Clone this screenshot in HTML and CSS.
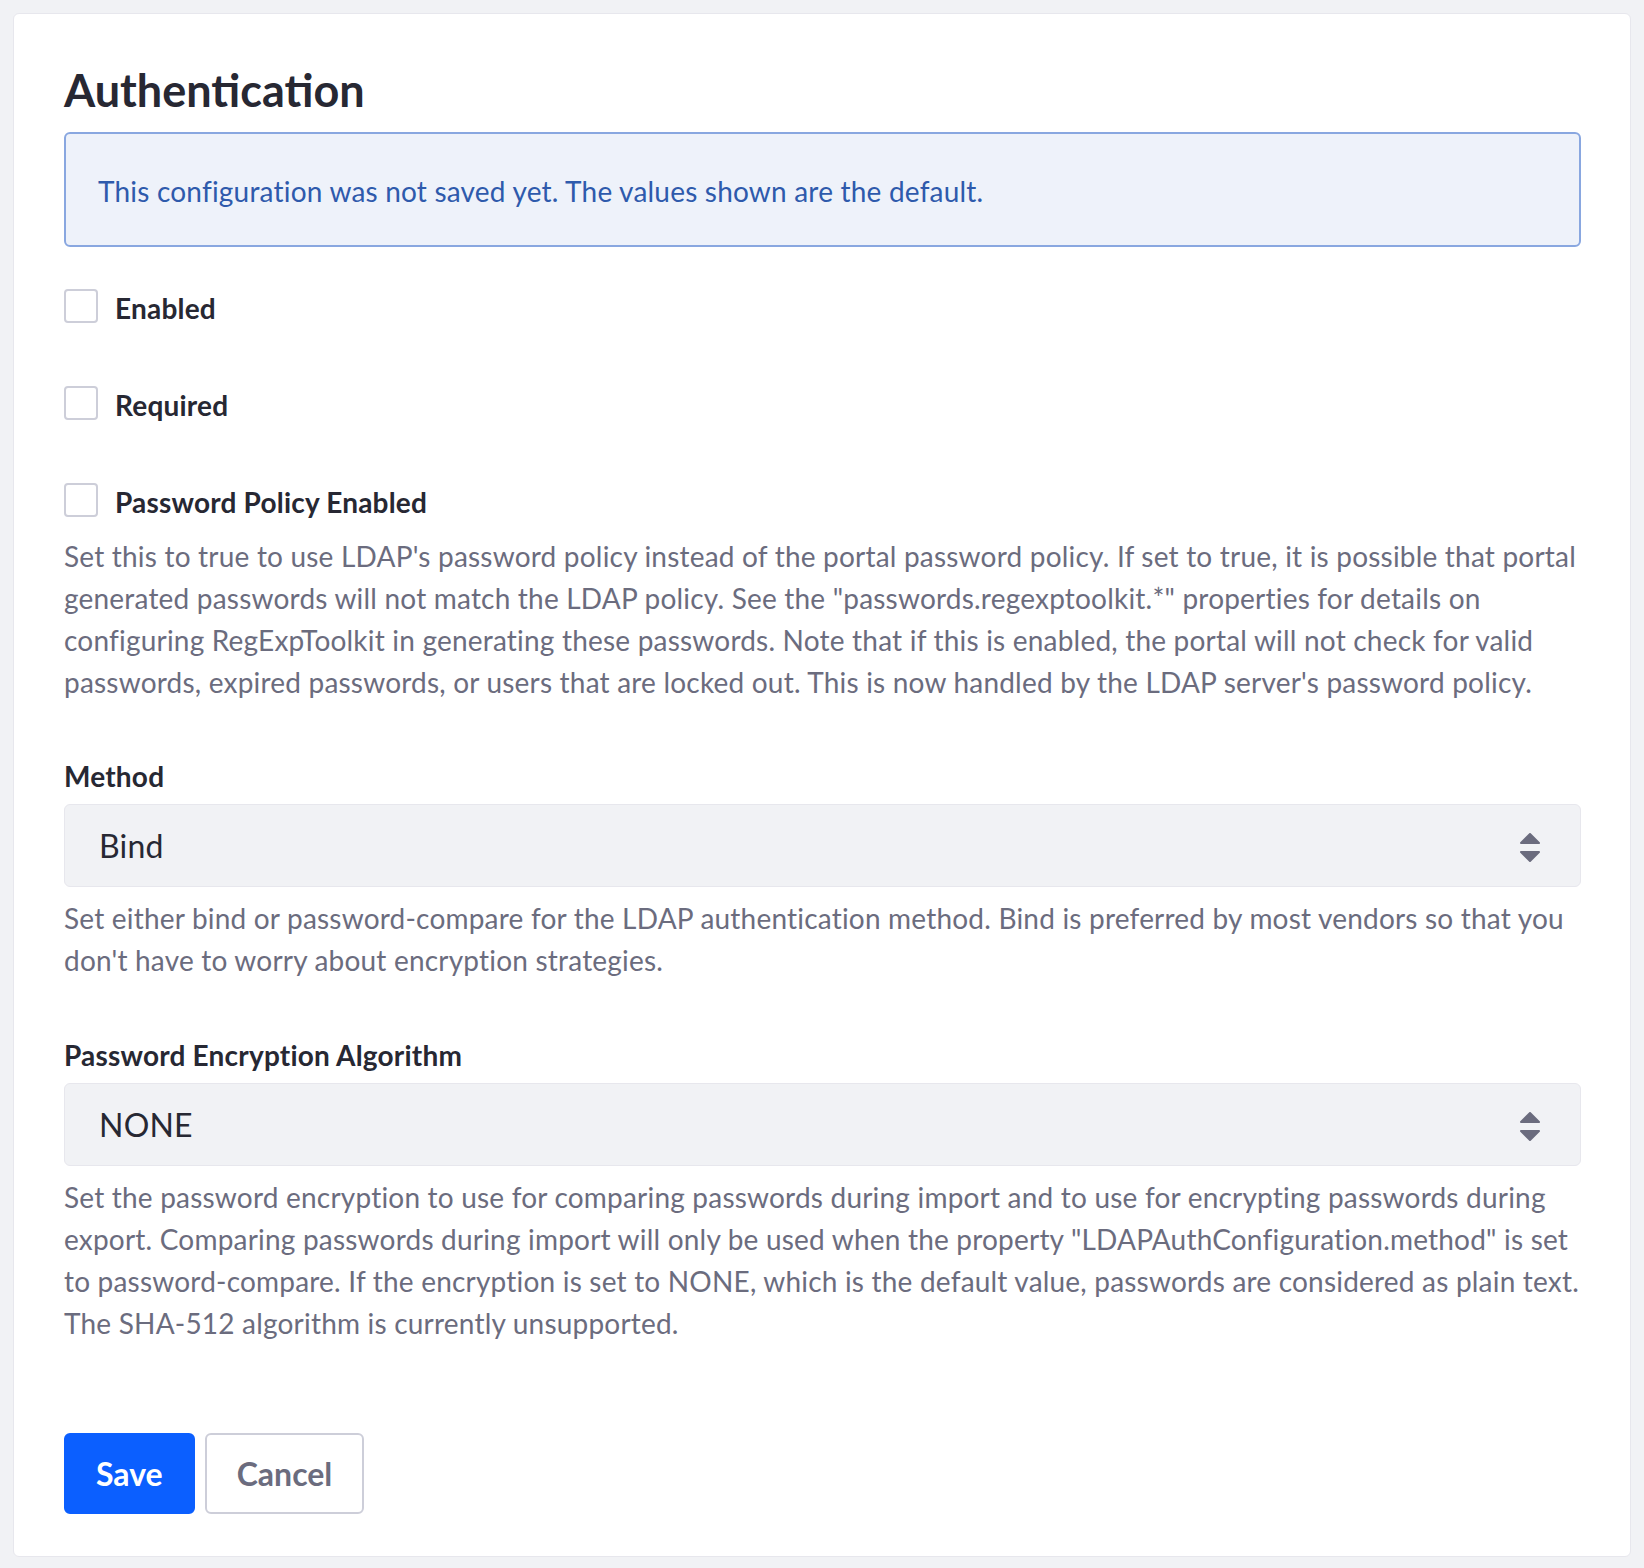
FILE: index.html
```html
<!DOCTYPE html>
<html lang="en">
<head>
<meta charset="utf-8">
<title>Authentication</title>
<link rel="stylesheet" href="styles.css">
</head>
<body>
<div class="sheet">
  <h1 class="sheet-title">Authentication</h1>
  <div class="alert">This configuration was not saved yet. The values shown are the default.</div>

  <div class="form-group">
    <label class="check"><span class="check-box"></span><span class="check-label">Enabled</span></label>
  </div>
  <div class="form-group">
    <label class="check"><span class="check-box"></span><span class="check-label">Required</span></label>
  </div>
  <div class="form-group with-text">
    <label class="check"><span class="check-box"></span><span class="check-label">Password Policy Enabled</span></label>
    <p class="form-text">Set this to true to use LDAP's password policy instead of the portal password policy. If set to true, it is possible that portal generated passwords will not match the LDAP policy. See the "passwords.regexptoolkit.*" properties for details on configuring RegExpToolkit in generating these passwords. Note that if this is enabled, the portal will not check for valid passwords, expired passwords, or users that are locked out. This is now handled by the LDAP server's password policy.</p>
  </div>

  <div class="form-group select-group">
    <div class="field-label">Method</div>
    <div class="select">
      <span>Bind</span>
      <svg class="caret" width="20" height="30" viewBox="0 0 20 30"><path d="M10 1 L19 10 L1 10 Z M1 19 L19 19 L10 28 Z" fill="#6b6c7e" stroke="#6b6c7e" stroke-width="2" stroke-linejoin="round"/></svg>
    </div>
    <p class="form-text tight">Set either bind or password-compare for the LDAP authentication method. Bind is preferred by most vendors so that you don't have to worry about encryption strategies.</p>
  </div>

  <div class="form-group select-group last">
    <div class="field-label">Password Encryption Algorithm</div>
    <div class="select">
      <span>NONE</span>
      <svg class="caret" width="20" height="30" viewBox="0 0 20 30"><path d="M10 1 L19 10 L1 10 Z M1 19 L19 19 L10 28 Z" fill="#6b6c7e" stroke="#6b6c7e" stroke-width="2" stroke-linejoin="round"/></svg>
    </div>
    <p class="form-text tight">Set the password encryption to use for comparing passwords during import and to use for encrypting passwords during export. Comparing passwords during import will only be used when the property "LDAPAuthConfiguration.method" is set to password-compare. If the encryption is set to NONE, which is the default value, passwords are considered as plain text. The SHA-512 algorithm is currently unsupported.</p>
  </div>

  <div class="actions">
    <button class="btn btn-primary" type="button">Save</button>
    <button class="btn btn-secondary" type="button">Cancel</button>
  </div>
</div>
</body>
</html>
```

FILE: styles.css
```css
html, body {
  margin: 0;
  padding: 0;
}
body {
  background: #f1f2f5;
  padding: 13px;
  font-family: Lato, "Open Sans", sans-serif;
  font-size: 28px;
  line-height: 42px;
  letter-spacing: 0.2px;
  color: #272833;
}
.sheet {
  background: #fff;
  border: 1px solid #e7e7ed;
  border-radius: 6px;
  padding: 48px 49px 42px 50px;
}
.sheet-title {
  margin: 0 0 13px;
  font-size: 45px;
  line-height: 57px;
  font-weight: 700;
  letter-spacing: 0;
  color: #272833;
}
.alert {
  background: #eef2fa;
  border: 2px solid #89a7e0;
  border-radius: 6px;
  color: #2e5aac;
  padding: 36px 32px 33px;
  margin-bottom: 40px;
}
.form-group {
  margin-bottom: 55px;
}
.form-group.with-text {
  margin-bottom: 52px;
}
.check {
  display: flex;
  align-items: center;
  gap: 17px;
  height: 42px;
}
.check-box {
  width: 30px;
  height: 30px;
  border: 2px solid #cdced9;
  border-radius: 4px;
  background: #fff;
  margin-top: -4px;
}
.check-label {
  font-weight: 700;
}
.form-text {
  margin: 12px 0 0;
  color: #6b6c7e;
}
.form-text.tight {
  margin-top: 10px;
}
.select-group {
  margin-bottom: 53px;
}
.select-group.last {
  margin-bottom: 89px;
}
.field-label {
  font-weight: 700;
  margin-bottom: 7px;
}
.select {
  height: 81px;
  background: #f1f2f5;
  border: 1px solid #e7e7ed;
  border-radius: 6px;
  display: flex;
  align-items: center;
  justify-content: space-between;
  padding: 0 40px 0 34px;
  font-size: 32px;
  color: #272833;
}
.caret {
  display: block;
  margin-top: 4px;
}
.actions {
  display: flex;
  gap: 10px;
}
.btn {
  height: 81px;
  border-radius: 6px;
  font-family: Lato, "Open Sans", sans-serif;
  font-size: 32px;
  font-weight: 700;
  padding: 0 30px;
  cursor: pointer;
}
.btn-primary {
  background: #0b5fff;
  border: 2px solid #0b5fff;
  color: #fff;
}
.btn-secondary {
  background: #fff;
  border: 2px solid #cdced9;
  color: #6b6c7e;
}
```
